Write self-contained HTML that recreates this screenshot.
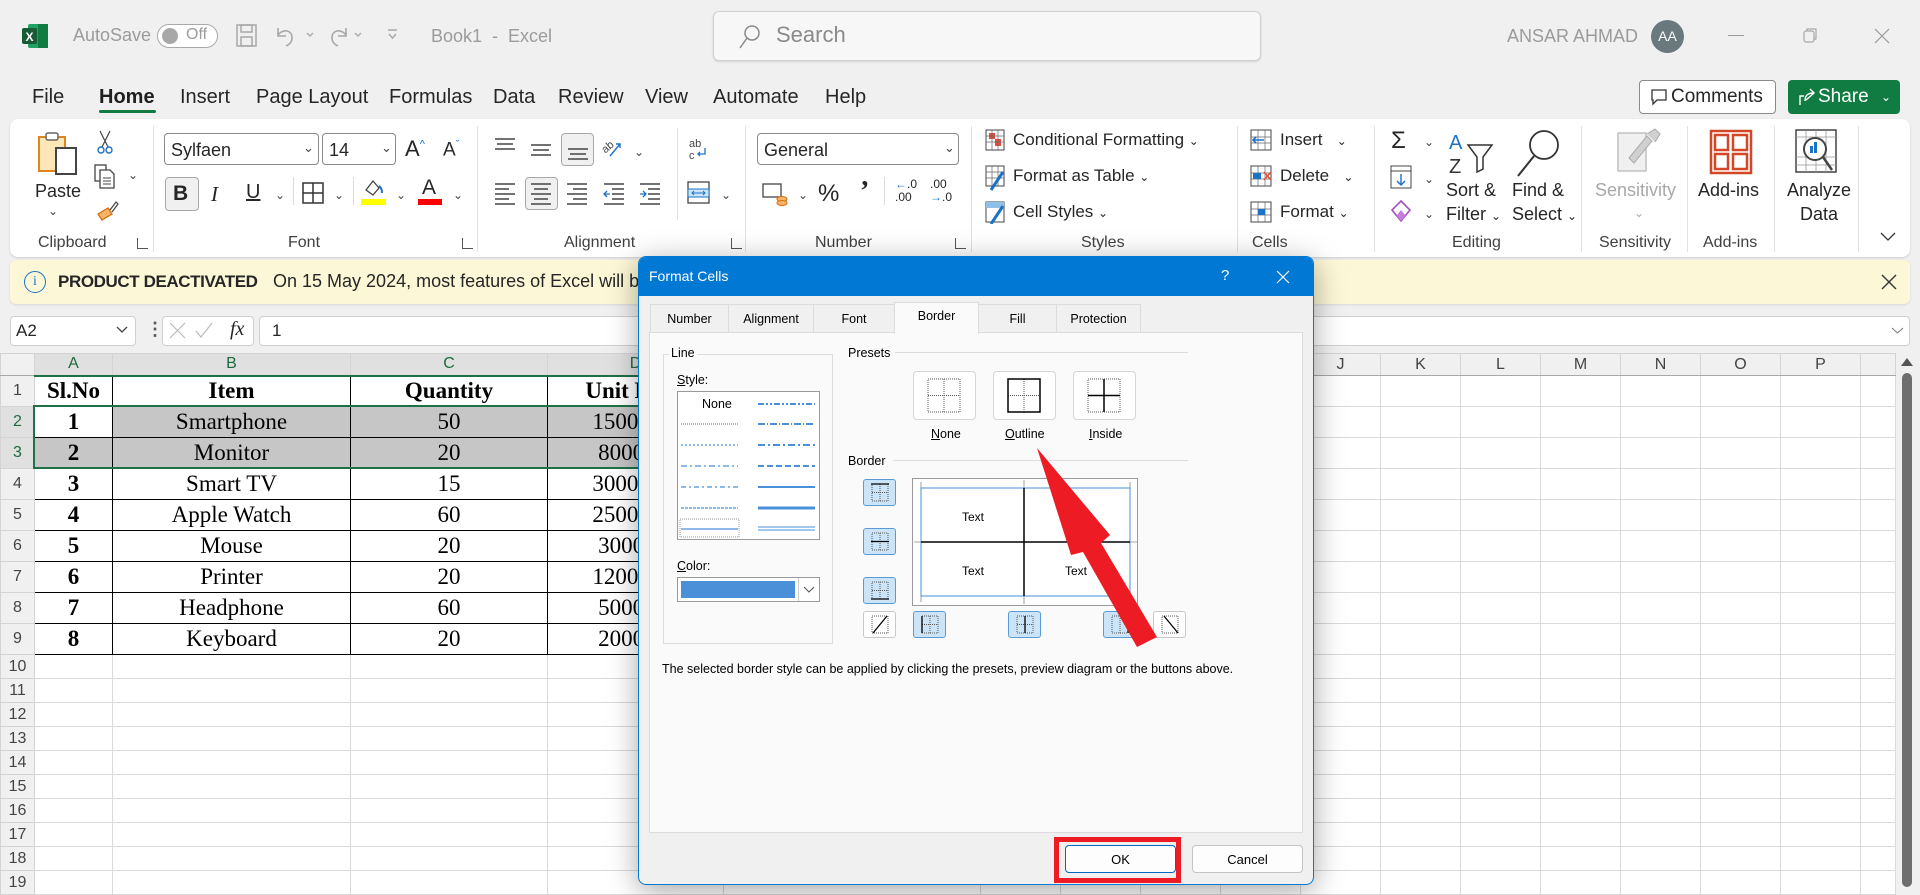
<!DOCTYPE html>
<html><head><meta charset="utf-8">
<style>
*{box-sizing:border-box;margin:0;padding:0}
body{width:1920px;height:887px;overflow:hidden;background:#f0f0f0;font-family:"Liberation Sans",sans-serif;color:#262626;position:relative}
.a{position:absolute}
.t{position:absolute;white-space:nowrap}
.g{color:#9b9b9b}
.menu span{position:absolute;top:86px;font-size:20px;color:#262626}
.rib{left:10px;top:119px;width:1900px;height:138px;background:#fff;border-radius:8px;box-shadow:0 1px 2px rgba(0,0,0,.15)}
.lbl{position:absolute;top:234px;font-size:16px;color:#404040;white-space:nowrap}
.sep{position:absolute;top:126px;width:1px;height:126px;background:#e1e1e1}
.rt{position:absolute;font-size:17px;color:#262626;white-space:nowrap}
.chev{position:absolute;font-size:12px;color:#444}
.combo{position:absolute;border:1px solid #8a8a8a;border-radius:4px;background:#fff;font-size:18px;padding:6px 0 0 6px;height:32px}
.lau{position:absolute;top:238px;width:11px;height:11px;border-left:1px solid #555;border-bottom:1px solid #555}
#sheet{position:absolute;left:0;top:353px;border-collapse:collapse;table-layout:fixed;background:#fff}
#sheet td,#sheet th{border:1px solid #dadada;padding:0;overflow:hidden;white-space:nowrap}
#sheet thead th{height:22px;background:#f0f0f0;font-weight:normal;font-size:16px;color:#444;border-color:#d4d4d4;border-bottom:1px solid #a8a8a8}
#sheet thead th.sc{background:#e0e0e0;color:#1d6b3c;border-bottom:2px solid #1e7145}
#sheet tbody th{background:#f0f0f0;font-weight:normal;font-size:16px;color:#444;text-align:center;border-color:#d4d4d4}
#sheet tbody th.sr{background:#e0e0e0;color:#1d6b3c}
#sheet tr.d td{height:31px;font-family:"Liberation Serif",serif;font-size:23px;color:#000;text-align:center}
#sheet tr.d td.k{border:1px solid #000}
#sheet tr.d td.b{font-weight:bold}
#sheet tr.d td.s{background:#c6c6c6}
#sheet tr.e td,#sheet tr.e th{height:24px}
#dlg{left:638px;top:256px;width:676px;height:629px;background:#f0f0f0;border:1px solid #0078d4;border-radius:8px;box-shadow:0 6px 30px rgba(0,0,0,.35);overflow:hidden;font-size:12.5px;color:#000}
#dlg .t{font-size:12.5px}
.tab{position:absolute;top:47px;height:28px;border:1px solid #dcdcdc;border-bottom:none;background:#f0f0f0;text-align:center;padding-top:7px;font-size:12.5px}
.pb{position:absolute;width:63px;height:49px;background:#fff;border:1px solid #d6d6d6;border-radius:4px}
.bb{position:absolute;width:33px;height:27px;border:1px solid #5b9bd5;border-radius:3px;background:#cce4f7}
.bw{background:#fff;border-color:#c8c8c8}
.btn{position:absolute;top:588px;height:28px;border:1px solid #c4c4c4;border-radius:4px;background:#fdfdfd;text-align:center;padding-top:6px;font-size:13px}
</style></head><body>

<svg class="a" style="left:22px;top:24px" width="26" height="24" viewBox="0 0 26 24"><rect x="6" y="0" width="20" height="24" rx="2" fill="#21a366"/><rect x="16" y="0" width="10" height="24" fill="#107c41"/><rect x="0" y="4" width="15" height="16" rx="2" fill="#185c37"/><text x="3.5" y="17" font-size="12" font-weight="bold" fill="#fff" font-family="Liberation Sans">X</text></svg>
<div class="t g" style="left:73px;top:25px;font-size:18px">AutoSave</div>
<div class="a" style="left:157px;top:24px;width:61px;height:24px;border:1px solid #a8a8a8;border-radius:12px;background:#fff"></div>
<div class="a" style="left:162px;top:28px;width:16px;height:16px;border-radius:50%;background:#a8a8a8"></div>
<div class="t g" style="left:186px;top:26px;font-size:16px">Off</div>
<svg class="a" style="left:236px;top:24px" width="22" height="24"><rect x="1" y="1" width="19" height="21" fill="none" stroke="#a8a8a8" stroke-width="1.5"/><rect x="5" y="1" width="11" height="7" fill="none" stroke="#a8a8a8" stroke-width="1.5"/><rect x="5" y="13" width="11" height="9" fill="none" stroke="#a8a8a8" stroke-width="1.5"/></svg>
<svg class="a" style="left:274px;top:24px" width="50" height="24"><path d="M4 4v8h8M4 11c4-6 14-6 14 3 0 4-3 7-6 8" fill="none" stroke="#a8a8a8" stroke-width="1.6"/><path d="M33 9l3 3 3-3" fill="none" stroke="#a8a8a8" stroke-width="1.3"/></svg>
<svg class="a" style="left:328px;top:24px" width="50" height="24"><path d="M18 4v8h-8M18 11c-4-6-14-6-14 3 0 4 3 7 6 8" fill="none" stroke="#a8a8a8" stroke-width="1.6"/><path d="M27 9l3 3 3-3" fill="none" stroke="#a8a8a8" stroke-width="1.3"/></svg>
<svg class="a" style="left:386px;top:28px" width="14" height="14"><path d="M2 2h9M3 6l3.5 4 3.5-4" fill="none" stroke="#a8a8a8" stroke-width="1.4"/></svg>
<div class="t g" style="left:431px;top:26px;font-size:18px">Book1&nbsp; - &nbsp;Excel</div>
<div class="a" style="left:713px;top:11px;width:548px;height:50px;background:#f7f7f7;border:1px solid #d0d0d0;border-radius:6px;box-shadow:0 1px 2px rgba(0,0,0,.12)"></div>
<svg class="a" style="left:738px;top:24px" width="24" height="26"><circle cx="14" cy="9" r="7" fill="none" stroke="#8a8a8a" stroke-width="1.5"/><path d="M9 14L2 24" stroke="#8a8a8a" stroke-width="1.5"/></svg>
<div class="t" style="left:776px;top:22px;font-size:22px;color:#8a8a8a">Search</div>
<div class="t g" style="left:1507px;top:26px;font-size:18px">ANSAR AHMAD</div>
<div class="a" style="left:1651px;top:20px;width:33px;height:33px;border-radius:50%;background:#69797e;color:#fff;font-size:14px;text-align:center;line-height:33px">AA</div>
<div class="a" style="left:1728px;top:35px;width:16px;height:1px;background:#999"></div>
<svg class="a" style="left:1803px;top:27px" width="16" height="16"><rect x="1" y="4" width="10" height="11" rx="2" fill="none" stroke="#999"/><path d="M4 4V2h9v10h-2" fill="none" stroke="#999"/></svg>
<svg class="a" style="left:1874px;top:28px" width="16" height="16"><path d="M1 1l14 14M15 1L1 15" stroke="#999" stroke-width="1.2"/></svg>

<div class="menu">
<span style="left:32px">File</span><span style="left:99px;font-weight:bold;color:#1f1f1f">Home</span><span style="left:180px">Insert</span><span style="left:256px">Page Layout</span><span style="left:389px">Formulas</span><span style="left:493px">Data</span><span style="left:558px">Review</span><span style="left:645px">View</span><span style="left:713px">Automate</span><span style="left:825px">Help</span>
</div>
<div class="a" style="left:99px;top:110px;width:57px;height:3px;background:#107c41;border-radius:2px"></div>
<div class="a" style="left:1639px;top:80px;width:137px;height:34px;background:#fff;border:1px solid #8a8a8a;border-radius:4px"></div>
<svg class="a" style="left:1650px;top:88px" width="18" height="18"><path d="M2 2h14v10H7l-4 4v-4H2z" fill="none" stroke="#333" stroke-width="1.3"/></svg>
<div class="t" style="left:1671px;top:86px;font-size:19px">Comments</div>
<div class="a" style="left:1788px;top:80px;width:112px;height:34px;background:#107c41;border-radius:4px"></div>
<svg class="a" style="left:1797px;top:87px" width="20" height="20"><path d="M3 18V9h4M9 13l8-7-4-4M17 6c-6 0-9 2-9 8" fill="none" stroke="#fff" stroke-width="1.4"/></svg>
<div class="t" style="left:1818px;top:86px;font-size:19px;color:#fff">Share</div>
<div class="t" style="left:1881px;top:90px;font-size:12px;color:#fff">&#8964;</div>

<div class="a rib"></div>
<svg class="a" style="left:37px;top:130px" width="44" height="50"><rect x="2" y="7" width="26" height="34" fill="#fde7b8" stroke="#e0861c" stroke-width="2"/><rect x="9" y="3" width="12" height="7" rx="2" fill="#fff" stroke="#666" stroke-width="1.5"/><rect x="19" y="18" width="20" height="26" fill="#fff" stroke="#444" stroke-width="2"/></svg>
<div class="rt" style="left:35px;top:181px;font-size:18px">Paste</div>
<div class="chev" style="left:48px;top:204px">&#8964;</div>
<svg class="a" style="left:96px;top:130px" width="18" height="24"><path d="M4 1l8 16M14 1L6 17" stroke="#444" stroke-width="1.2"/><circle cx="5" cy="20" r="3" fill="none" stroke="#1a73c8" stroke-width="1.4"/><circle cx="13" cy="20" r="3" fill="none" stroke="#1a73c8" stroke-width="1.4"/></svg>
<svg class="a" style="left:94px;top:164px" width="24" height="26"><rect x="1" y="1" width="11" height="16" fill="#fff" stroke="#444" stroke-width="1.3"/><path d="M6 6h10l4 4v14H6z" fill="#fff" stroke="#444" stroke-width="1.3"/><path d="M9 14h8M9 17h8M9 20h8" stroke="#444"/></svg>
<div class="chev" style="left:128px;top:168px">&#8964;</div>
<svg class="a" style="left:96px;top:200px" width="24" height="22"><path d="M2 14l10-6 4 6-10 6z" fill="#f8b26a" stroke="#d4700b" stroke-width="1.3"/><path d="M14 10l6-8 2 2-6 8" fill="#fff" stroke="#444" stroke-width="1.2"/></svg>
<div class="lbl" style="left:38px">Clipboard</div>
<div class="lau" style="left:137px"></div>
<div class="sep" style="left:153px"></div>
<div class="combo" style="left:164px;top:133px;width:155px">Sylfaen</div>
<div class="chev" style="left:303px;top:140px;font-size:13px">&#8964;</div>
<div class="combo" style="left:322px;top:133px;width:74px">14</div>
<div class="chev" style="left:381px;top:140px;font-size:13px">&#8964;</div>
<div class="rt" style="left:405px;top:136px;font-size:22px">A<sup style="font-size:11px;color:#1a73c8">^</sup></div>
<div class="rt" style="left:443px;top:139px;font-size:19px">A<sup style="font-size:11px;color:#1a73c8">&#711;</sup></div>
<div class="a" style="left:165px;top:177px;width:34px;height:34px;background:#f0f0f0;border:1px solid #a8a8a8;border-radius:4px"></div>
<div class="rt" style="left:173px;top:182px;font-size:21px;font-weight:bold">B</div>
<div class="rt" style="left:211px;top:182px;font-size:21px;font-style:italic;font-family:'Liberation Serif',serif">I</div>
<div class="rt" style="left:246px;top:181px;font-size:20px;text-decoration:underline">U</div>
<div class="chev" style="left:275px;top:188px">&#8964;</div>
<div class="a" style="left:293px;top:177px;width:1px;height:28px;background:#ddd"></div>
<svg class="a" style="left:302px;top:182px" width="22" height="22"><rect x="1" y="1" width="20" height="20" fill="none" stroke="#333" stroke-width="1.5"/><path d="M11 1v20M1 11h20" stroke="#333" stroke-width="1.5"/></svg>
<div class="chev" style="left:334px;top:188px">&#8964;</div>
<div class="a" style="left:353px;top:177px;width:1px;height:28px;background:#ddd"></div>
<svg class="a" style="left:361px;top:178px" width="26" height="20"><path d="M5 12l7-9 6 7-6 7z" fill="none" stroke="#444" stroke-width="1.3"/><path d="M18 8c3 2 3 5 3 7" stroke="#1a73c8" stroke-width="2" fill="none"/></svg>
<div class="a" style="left:361px;top:199px;width:25px;height:6px;background:#ffff00"></div>
<div class="chev" style="left:396px;top:188px">&#8964;</div>
<div class="rt" style="left:422px;top:176px;font-size:21px">A</div>
<div class="a" style="left:418px;top:199px;width:24px;height:6px;background:#ff0000"></div>
<div class="chev" style="left:453px;top:188px">&#8964;</div>
<div class="lbl" style="left:288px">Font</div>
<div class="lau" style="left:462px"></div>
<div class="sep" style="left:477px"></div>
<svg class="a" style="left:494px;top:136px" width="110" height="26"><g stroke="#444" stroke-width="1.5"><path d="M1 3h20M3 8h16M1 13h20"/><path d="M37 9h20M39 14h16M37 19h20"/></g></svg>
<div class="a" style="left:561px;top:133px;width:33px;height:33px;background:#f0f0f0;border:1px solid #a8a8a8;border-radius:4px"></div>
<svg class="a" style="left:567px;top:140px" width="22" height="22"><g stroke="#444" stroke-width="1.5"><path d="M1 9h20M3 14h16M1 19h20"/></g></svg>
<svg class="a" style="left:600px;top:136px" width="24" height="24"><text x="1" y="14" font-size="11" font-family="Liberation Sans" fill="#444" transform="rotate(-40 8 10)">ab</text><path d="M10 20l10-12M16 8h4v4" stroke="#1a73c8" stroke-width="1.4" fill="none"/></svg>
<div class="chev" style="left:634px;top:145px">&#8964;</div>
<div class="a" style="left:525px;top:177px;width:33px;height:33px;background:#f0f0f0;border:1px solid #a8a8a8;border-radius:4px"></div>
<svg class="a" style="left:494px;top:182px" width="175" height="24"><g stroke="#444" stroke-width="1.5"><path d="M1 2h20M1 7h14M1 12h20M1 17h14M1 22h20"/><path d="M37 2h20M40 7h14M37 12h20M40 17h14M37 22h20"/><path d="M73 2h20M79 7h14M73 12h20M79 17h14M73 22h20"/><path d="M110 2h20M118 7h12M118 12h12M118 17h12M110 22h20"/><path d="M146 2h20M154 7h12M154 12h12M154 17h12M146 22h20"/></g><path d="M116 12h-6M113 9l-3 3 3 3" stroke="#1a73c8" stroke-width="1.3" fill="none"/><path d="M146 12h6M149 9l3 3-3 3" stroke="#1a73c8" stroke-width="1.3" fill="none"/></svg>
<div class="a" style="left:677px;top:128px;width:1px;height:92px;background:#e1e1e1"></div>
<svg class="a" style="left:688px;top:136px" width="22" height="26"><text x="1" y="11" font-size="11" font-family="Liberation Sans" fill="#444">ab</text><text x="1" y="23" font-size="11" font-family="Liberation Sans" fill="#444">c</text><path d="M17 12v6h-7M12 16l-2 2 2 2" stroke="#1a73c8" stroke-width="1.3" fill="none"/></svg>
<svg class="a" style="left:687px;top:181px" width="24" height="24"><rect x="1" y="1" width="21" height="21" fill="#fff" stroke="#444" stroke-width="1.3"/><rect x="1" y="8" width="21" height="8" fill="#cde4f7" stroke="#1a73c8"/><path d="M5 12h13M7 10l-2 2 2 2M16 10l2 2-2 2" stroke="#1a73c8" fill="none"/></svg>
<div class="chev" style="left:721px;top:188px">&#8964;</div>
<div class="lbl" style="left:564px">Alignment</div>
<div class="lau" style="left:731px"></div>
<div class="sep" style="left:745px"></div>
<div class="combo" style="left:757px;top:133px;width:202px">General</div>
<div class="chev" style="left:944px;top:140px;font-size:13px">&#8964;</div>
<svg class="a" style="left:762px;top:182px" width="26" height="26"><rect x="1" y="2" width="18" height="13" fill="#fff" stroke="#444" stroke-width="1.3"/><ellipse cx="20" cy="17" rx="5" ry="2.5" fill="#f8b26a" stroke="#d4700b"/><ellipse cx="20" cy="21" rx="5" ry="2.5" fill="#f8b26a" stroke="#d4700b"/></svg>
<div class="chev" style="left:798px;top:188px">&#8964;</div>
<div class="rt" style="left:818px;top:180px;font-size:24px">%</div>
<div class="rt" style="left:860px;top:176px;font-size:28px;font-weight:bold;font-family:'Liberation Serif',serif">&#8217;</div>
<div class="a" style="left:884px;top:177px;width:1px;height:28px;background:#ddd"></div>
<div class="rt" style="left:895px;top:178px;font-size:12px;line-height:13px"><span style="color:#1a73c8">&#8592;</span>.0<br>.00</div>
<div class="rt" style="left:930px;top:178px;font-size:12px;line-height:13px">.00<br><span style="color:#1a73c8">&#8594;</span>.0</div>
<div class="lbl" style="left:815px">Number</div>
<div class="lau" style="left:955px"></div>
<div class="sep" style="left:971px"></div>
<svg class="a" style="left:985px;top:128px" width="22" height="96"><rect x="1" y="2" width="18" height="20" fill="#fff" stroke="#444"/><rect x="4" y="5" width="6" height="6" fill="#e74c3c"/><rect x="10" y="11" width="6" height="7" fill="#e74c3c"/><path d="M1 8h18M1 14h18M7 2v20M13 2v20" stroke="#666" stroke-width=".7"/><rect x="1" y="38" width="18" height="20" fill="#fff" stroke="#444"/><path d="M1 44h18M1 50h18M7 38v20M13 38v20" stroke="#666" stroke-width=".7"/><path d="M6 62l12-18" stroke="#1a73c8" stroke-width="3"/><rect x="1" y="74" width="18" height="20" fill="#fff" stroke="#444"/><rect x="1" y="74" width="18" height="6" fill="#8fc0ea"/><path d="M6 96l12-18" stroke="#1a73c8" stroke-width="3"/></svg>
<div class="rt" style="left:1013px;top:130px">Conditional Formatting <span style="font-size:12px">&#8964;</span></div>
<div class="rt" style="left:1013px;top:166px">Format as Table <span style="font-size:12px">&#8964;</span></div>
<div class="rt" style="left:1013px;top:202px">Cell Styles <span style="font-size:12px">&#8964;</span></div>
<div class="lbl" style="left:1081px">Styles</div>
<div class="sep" style="left:1237px"></div>
<svg class="a" style="left:1250px;top:128px" width="24" height="96"><rect x="1" y="2" width="20" height="20" fill="#fff" stroke="#444"/><path d="M1 9h20M1 15h20M8 2v20M15 2v20" stroke="#666" stroke-width=".7"/><path d="M14 12H3M6 9l-3 3 3 3" stroke="#1a73c8" stroke-width="1.6" fill="none"/><rect x="1" y="38" width="20" height="20" fill="#fff" stroke="#444"/><path d="M1 45h20M1 51h20M8 38v20M15 38v20" stroke="#666" stroke-width=".7"/><rect x="3" y="45" width="8" height="6" fill="#1a73c8"/><path d="M14 44l7 8M21 44l-7 8" stroke="#e74c3c" stroke-width="1.5"/><rect x="1" y="74" width="20" height="20" fill="#fff" stroke="#444"/><path d="M1 81h20M1 87h20M8 74v20M15 74v20" stroke="#666" stroke-width=".7"/><rect x="8" y="81" width="7" height="6" fill="#1a73c8"/></svg>
<div class="rt" style="left:1280px;top:130px">Insert &nbsp;&nbsp;<span style="font-size:12px">&#8964;</span></div>
<div class="rt" style="left:1280px;top:166px">Delete &nbsp;&nbsp;<span style="font-size:12px">&#8964;</span></div>
<div class="rt" style="left:1280px;top:202px">Format <span style="font-size:12px">&#8964;</span></div>
<div class="lbl" style="left:1252px">Cells</div>
<div class="sep" style="left:1374px"></div>
<div class="rt" style="left:1391px;top:127px;font-size:24px">&#931;</div>
<div class="chev" style="left:1424px;top:135px">&#8964;</div>
<svg class="a" style="left:1390px;top:165px" width="22" height="24"><rect x="1" y="1" width="20" height="22" fill="#fff" stroke="#444"/><path d="M1 6h20" stroke="#444"/><path d="M11 9v11M7 16l4 4 4-4" stroke="#1a73c8" stroke-width="1.4" fill="none"/></svg>
<div class="chev" style="left:1424px;top:172px">&#8964;</div>
<svg class="a" style="left:1390px;top:199px" width="22" height="24"><path d="M11 2l9 9-9 11-9-11z" fill="#fff" stroke="#a64dbf" stroke-width="1.6"/><path d="M6.5 16.5l4.5-5.5 4.5 5.5-4.5 5.5z" fill="#c77dde"/></svg>
<div class="chev" style="left:1424px;top:207px">&#8964;</div>
<svg class="a" style="left:1448px;top:129px" width="50" height="48"><text x="1" y="20" font-size="20" fill="#1a73c8" font-family="Liberation Sans">A</text><text x="1" y="44" font-size="20" fill="#333" font-family="Liberation Sans">Z</text><path d="M20 16h24l-9 12v12l-6 3V28z" fill="none" stroke="#333" stroke-width="1.5"/></svg>
<div class="rt" style="left:1446px;top:180px;font-size:18px">Sort &amp;</div>
<div class="rt" style="left:1446px;top:204px;font-size:18px">Filter <span style="font-size:12px">&#8964;</span></div>
<svg class="a" style="left:1514px;top:128px" width="48" height="50"><circle cx="30" cy="17" r="14" fill="none" stroke="#333" stroke-width="1.8"/><path d="M20 28L4 48" stroke="#333" stroke-width="2"/></svg>
<div class="rt" style="left:1512px;top:180px;font-size:18px">Find &amp;</div>
<div class="rt" style="left:1512px;top:204px;font-size:18px">Select <span style="font-size:12px">&#8964;</span></div>
<div class="lbl" style="left:1452px">Editing</div>
<div class="sep" style="left:1581px"></div>
<svg class="a" style="left:1617px;top:128px" width="46" height="50"><rect x="1" y="5" width="28" height="38" fill="#f0f0f0" stroke="#c0c0c0" stroke-width="1.5"/><path d="M12 30l18-22 5 5-18 22z" fill="#d0d0d0" stroke="#aaa"/><path d="M30 6l8-5 5 5-5 8" fill="#d0d0d0" stroke="#aaa"/></svg>
<div class="rt" style="left:1595px;top:180px;font-size:18px;color:#a8a8a8">Sensitivity</div>
<div class="chev" style="left:1634px;top:206px;color:#aaa">&#8964;</div>
<div class="lbl" style="left:1599px">Sensitivity</div>
<div class="sep" style="left:1687px"></div>
<svg class="a" style="left:1709px;top:129px" width="44" height="46"><g fill="none" stroke="#d24726" stroke-width="2.5"><rect x="2" y="2" width="40" height="42"/><rect x="6" y="6" width="13" height="15"/><rect x="24" y="6" width="14" height="15"/><rect x="6" y="25" width="13" height="15"/><rect x="24" y="25" width="14" height="15"/></g></svg>
<div class="rt" style="left:1698px;top:180px;font-size:18px">Add-ins</div>
<div class="lbl" style="left:1703px">Add-ins</div>
<div class="sep" style="left:1774px"></div>
<svg class="a" style="left:1795px;top:129px" width="46" height="46"><rect x="1" y="1" width="40" height="42" fill="#fff" stroke="#444" stroke-width="1.5"/><path d="M1 8h40M1 28h40M1 36h40M11 1v42M21 1v42M31 1v42" stroke="#999" stroke-width=".8"/><circle cx="20" cy="20" r="11" fill="#fff" stroke="#444" stroke-width="2"/><rect x="15" y="17" width="3" height="7" fill="#1a73c8"/><rect x="19" y="13" width="3" height="11" fill="#1a73c8"/><path d="M28 28l9 13" stroke="#444" stroke-width="2.5"/></svg>
<div class="rt" style="left:1787px;top:180px;font-size:18px">Analyze</div>
<div class="rt" style="left:1800px;top:204px;font-size:18px">Data</div>
<div class="sep" style="left:1858px"></div>
<svg class="a" style="left:1880px;top:232px" width="16" height="10"><path d="M1 1l7 7 7-7" fill="none" stroke="#333" stroke-width="1.3"/></svg>

<div class="a" style="left:10px;top:260px;width:1900px;height:44px;background:#fcf7d6;border-radius:6px;box-shadow:0 1px 2px rgba(0,0,0,.1)"></div>
<div class="a" style="left:24px;top:271px;width:22px;height:22px;border:1.5px solid #1a73c8;border-radius:50%;color:#1a73c8;font-size:14px;text-align:center;line-height:19px;font-family:'Liberation Serif',serif">i</div>
<div class="t" style="left:58px;top:272px;font-size:17px;font-weight:bold;color:#262626;letter-spacing:-0.4px">PRODUCT DEACTIVATED</div>
<div class="t" style="left:273px;top:271px;font-size:18px;color:#262626">On 15 May 2024, most features of Excel will be disabled.</div>
<svg class="a" style="left:1881px;top:274px" width="16" height="16"><path d="M1 1l14 14M15 1L1 15" stroke="#333" stroke-width="1.4"/></svg>

<div class="a" style="left:10px;top:316px;width:126px;height:30px;background:#fff;border:1px solid #d0d0d0;border-radius:4px"></div>
<div class="t" style="left:16px;top:321px;font-size:17px">A2</div>
<svg class="a" style="left:116px;top:326px" width="12" height="8"><path d="M1 1l5 5 5-5" fill="none" stroke="#444" stroke-width="1.3"/></svg>
<div class="t" style="left:146px;top:319px;font-size:18px;font-weight:bold;color:#555">&#8942;</div>
<div class="a" style="left:162px;top:316px;width:92px;height:30px;background:#fff;border:1px solid #d0d0d0;border-radius:4px"></div>
<svg class="a" style="left:169px;top:322px" width="50" height="18"><path d="M1 1l15 15M16 1L1 16" stroke="#bbb" stroke-width="1.2"/><path d="M27 9l5 6 11-14" fill="none" stroke="#bbb" stroke-width="1.2"/></svg>
<div class="t" style="left:230px;top:318px;font-size:20px;font-style:italic;font-family:'Liberation Serif',serif">fx</div>
<div class="a" style="left:259px;top:316px;width:1651px;height:30px;background:#fff;border:1px solid #d0d0d0;border-radius:4px"></div>
<div class="t" style="left:272px;top:321px;font-size:17px">1</div>
<svg class="a" style="left:1891px;top:327px" width="13" height="8"><path d="M1 1l5.5 5 5.5-5" fill="none" stroke="#777"/></svg>

<table id="sheet" style="width:1895px">
<colgroup><col style="width:34px"><col style="width:78px"><col style="width:238px"><col style="width:197px"><col style="width:176px"><col style="width:257px"><col style="width:80px"><col style="width:80px"><col style="width:80px"><col style="width:80px"><col style="width:80px"><col style="width:80px"><col style="width:80px"><col style="width:80px"><col style="width:80px"><col style="width:80px"><col style="width:80px"><col style="width:35px"></colgroup>
<thead><tr><th style="background:#f0f0f0"></th><th class="sc">A</th><th class="sc">B</th><th class="sc">C</th><th class="sc">D</th><th>E</th><th>F</th><th>G</th><th>H</th><th>I</th><th>J</th><th>K</th><th>L</th><th>M</th><th>N</th><th>O</th><th>P</th><th></th></tr></thead>
<tbody>
<tr class="d"><th>1</th><td class="k b">Sl.No</td><td class="k b">Item</td><td class="k b">Quantity</td><td class="k b">Unit Price</td><td></td><td></td><td></td><td></td><td></td><td></td><td></td><td></td><td></td><td></td><td></td><td></td><td></td></tr>
<tr class="d"><th class="sr">2</th><td class="k b">1</td><td class="k s">Smartphone</td><td class="k s">50</td><td class="k s">15000.00</td><td></td><td></td><td></td><td></td><td></td><td></td><td></td><td></td><td></td><td></td><td></td><td></td><td></td></tr>
<tr class="d"><th class="sr">3</th><td class="k b s">2</td><td class="k s">Monitor</td><td class="k s">20</td><td class="k s">8000.00</td><td></td><td></td><td></td><td></td><td></td><td></td><td></td><td></td><td></td><td></td><td></td><td></td><td></td></tr>
<tr class="d"><th>4</th><td class="k b">3</td><td class="k">Smart TV</td><td class="k">15</td><td class="k">30000.00</td><td></td><td></td><td></td><td></td><td></td><td></td><td></td><td></td><td></td><td></td><td></td><td></td><td></td></tr>
<tr class="d"><th>5</th><td class="k b">4</td><td class="k">Apple Watch</td><td class="k">60</td><td class="k">25000.00</td><td></td><td></td><td></td><td></td><td></td><td></td><td></td><td></td><td></td><td></td><td></td><td></td><td></td></tr>
<tr class="d"><th>6</th><td class="k b">5</td><td class="k">Mouse</td><td class="k">20</td><td class="k">3000.00</td><td></td><td></td><td></td><td></td><td></td><td></td><td></td><td></td><td></td><td></td><td></td><td></td><td></td></tr>
<tr class="d"><th>7</th><td class="k b">6</td><td class="k">Printer</td><td class="k">20</td><td class="k">12000.00</td><td></td><td></td><td></td><td></td><td></td><td></td><td></td><td></td><td></td><td></td><td></td><td></td><td></td></tr>
<tr class="d"><th>8</th><td class="k b">7</td><td class="k">Headphone</td><td class="k">60</td><td class="k">5000.00</td><td></td><td></td><td></td><td></td><td></td><td></td><td></td><td></td><td></td><td></td><td></td><td></td><td></td></tr>
<tr class="d"><th>9</th><td class="k b">8</td><td class="k">Keyboard</td><td class="k">20</td><td class="k">2000.00</td><td></td><td></td><td></td><td></td><td></td><td></td><td></td><td></td><td></td><td></td><td></td><td></td><td></td></tr>
<tr class="e"><th>10</th><td></td><td></td><td></td><td></td><td></td><td></td><td></td><td></td><td></td><td></td><td></td><td></td><td></td><td></td><td></td><td></td><td></td></tr>
<tr class="e"><th>11</th><td></td><td></td><td></td><td></td><td></td><td></td><td></td><td></td><td></td><td></td><td></td><td></td><td></td><td></td><td></td><td></td><td></td></tr>
<tr class="e"><th>12</th><td></td><td></td><td></td><td></td><td></td><td></td><td></td><td></td><td></td><td></td><td></td><td></td><td></td><td></td><td></td><td></td><td></td></tr>
<tr class="e"><th>13</th><td></td><td></td><td></td><td></td><td></td><td></td><td></td><td></td><td></td><td></td><td></td><td></td><td></td><td></td><td></td><td></td><td></td></tr>
<tr class="e"><th>14</th><td></td><td></td><td></td><td></td><td></td><td></td><td></td><td></td><td></td><td></td><td></td><td></td><td></td><td></td><td></td><td></td><td></td></tr>
<tr class="e"><th>15</th><td></td><td></td><td></td><td></td><td></td><td></td><td></td><td></td><td></td><td></td><td></td><td></td><td></td><td></td><td></td><td></td><td></td></tr>
<tr class="e"><th>16</th><td></td><td></td><td></td><td></td><td></td><td></td><td></td><td></td><td></td><td></td><td></td><td></td><td></td><td></td><td></td><td></td><td></td></tr>
<tr class="e"><th>17</th><td></td><td></td><td></td><td></td><td></td><td></td><td></td><td></td><td></td><td></td><td></td><td></td><td></td><td></td><td></td><td></td><td></td></tr>
<tr class="e"><th>18</th><td></td><td></td><td></td><td></td><td></td><td></td><td></td><td></td><td></td><td></td><td></td><td></td><td></td><td></td><td></td><td></td><td></td></tr>
<tr class="e"><th>19</th><td></td><td></td><td></td><td></td><td></td><td></td><td></td><td></td><td></td><td></td><td></td><td></td><td></td><td></td><td></td><td></td><td></td></tr>
</tbody></table>
<div class="a" style="left:33px;top:405px;width:690px;height:64px;border:2px solid #1e7145"></div>
<div class="a" style="left:1896px;top:353px;width:24px;height:534px;background:#f0f0f0"></div>
<svg class="a" style="left:1900px;top:357px" width="14" height="10"><path d="M7 1l6 8H1z" fill="#555"/></svg>
<div class="a" style="left:1902px;top:373px;width:10px;height:514px;background:#6e6e6e;border-radius:5px"></div>

<div class="a" id="dlg">
<div class="a" style="left:0;top:0;width:676px;height:39px;background:#0078d4"></div>
<div class="t" style="left:10px;top:11px;font-size:14px;color:#fff">Format Cells</div>
<div class="t" style="left:582px;top:10px;font-size:15px;color:#fff">?</div>
<svg class="a" style="left:637px;top:13px" width="14" height="14"><path d="M1 1l12 12M13 1L1 13" stroke="#fff" stroke-width="1.2"/></svg>
<div class="tab" style="left:11px;width:79px">Number</div>
<div class="tab" style="left:89px;width:86px">Alignment</div>
<div class="tab" style="left:174px;width:82px">Font</div>
<div class="tab" style="left:255px;top:45px;width:85px;height:32px;background:#fafafa;z-index:2;padding-top:6px">Border</div>
<div class="tab" style="left:339px;width:79px">Fill</div>
<div class="tab" style="left:417px;width:85px">Protection</div>
<div class="a" style="left:10px;top:75px;width:654px;height:501px;background:#fafafa;border:1px solid #dcdcdc"></div>
<div class="a" style="left:24px;top:97px;width:170px;height:290px;border:1px solid #dcdcdc"></div>
<div class="t" style="left:30px;top:89px;background:#fafafa;padding:0 2px">Line</div>
<div class="t" style="left:38px;top:116px"><u>S</u>tyle:</div>
<div class="a" style="left:38px;top:134px;width:143px;height:149px;background:#fff;border:1px solid #9a9a9a"></div>
<div class="t" style="left:63px;top:140px">None</div>
<svg class="a" style="left:40px;top:136px" width="140" height="146"><g stroke="#4a90d9" stroke-width="1.3" fill="none">
<path d="M2 31h57" stroke-dasharray="1 1"/><path d="M2 52h57" stroke-dasharray="2 2"/><path d="M2 73h57" stroke-dasharray="6 3 2 3"/><path d="M2 94h57" stroke-dasharray="5 3 2 3"/><path d="M2 115h57" stroke-dasharray="3 1"/>
<path d="M79 11h57" stroke-dasharray="6 2 2 2 2 2" stroke-width="2"/><path d="M79 31h57" stroke-dasharray="7 2 1 2" stroke-width="2"/><path d="M79 52h57" stroke-dasharray="7 3 2 3" stroke-width="2"/><path d="M79 73h57" stroke-dasharray="6 3" stroke-width="2"/><path d="M79 94h57" stroke-width="2"/><path d="M79 115h57" stroke-width="3"/><path d="M79 134h57M79 137h57" stroke-width="1"/>
<path d="M2 136h57"/></g><rect x="1" y="126" width="59" height="18" fill="none" stroke="#999" stroke-dasharray="1 1"/></svg>
<div class="t" style="left:38px;top:302px"><u>C</u>olor:</div>
<div class="a" style="left:38px;top:320px;width:143px;height:25px;background:#fff;border:1px solid #9a9a9a"></div>
<div class="a" style="left:42px;top:324px;width:114px;height:17px;background:#4a90d9"></div>
<div class="a" style="left:159px;top:321px;width:1px;height:23px;background:#ccc"></div>
<svg class="a" style="left:164px;top:329px" width="12" height="8"><path d="M1 1l5 5 5-5" fill="none" stroke="#555"/></svg>
<div class="t" style="left:209px;top:89px">Presets</div>
<div class="a" style="left:256px;top:95px;width:293px;height:1px;background:#dcdcdc"></div>
<div class="pb" style="left:274px;top:114px"></div>
<div class="pb" style="left:354px;top:114px"></div>
<div class="pb" style="left:434px;top:114px"></div>
<svg class="a" style="left:274px;top:114px" width="224" height="50"><g fill="none" stroke="#555" stroke-dasharray="1 1"><rect x="15" y="8" width="32" height="33"/><path d="M31 8v33M15 24.5h32"/><path d="M111 8v33M95 24.5h32"/><rect x="175" y="8" width="32" height="33"/></g><rect x="95" y="8" width="32" height="33" fill="none" stroke="#000" stroke-width="1.5"/><path d="M191 8v33M175 24.5h32" stroke="#000" stroke-width="1.5"/></svg>
<div class="t" style="left:292px;top:170px"><u>N</u>one</div>
<div class="t" style="left:366px;top:170px"><u>O</u>utline</div>
<div class="t" style="left:450px;top:170px"><u>I</u>nside</div>
<div class="t" style="left:209px;top:197px">Border</div>
<div class="a" style="left:254px;top:203px;width:295px;height:1px;background:#dcdcdc"></div>
<div class="bb" style="left:224px;top:222px"></div>
<div class="bb" style="left:224px;top:271px"></div>
<div class="bb" style="left:224px;top:320px"></div>
<div class="bb bw" style="left:224px;top:354px"></div>
<div class="bb" style="left:274px;top:354px"></div>
<div class="bb" style="left:369px;top:354px"></div>
<div class="bb" style="left:464px;top:354px"></div>
<div class="bb bw" style="left:514px;top:354px"></div>
<svg class="a" style="left:224px;top:222px" width="330" height="162"><g fill="none" stroke="#555" stroke-dasharray="1 1">
<rect x="9" y="5" width="16" height="17"/><rect x="9" y="54" width="16" height="17"/><rect x="9" y="103" width="16" height="17"/><rect x="9" y="137" width="16" height="17"/>
<rect x="59" y="137" width="16" height="17"/><rect x="154" y="137" width="16" height="17"/><rect x="249" y="137" width="16" height="17"/><rect x="299" y="137" width="16" height="17"/>
<path d="M17 5v17M9 13.5h16M17 54v17M17 103v17M9 111.5h16M67 137v17M59 145.5h16M154 145.5h16M257 137v17"/></g>
<g stroke="#000" stroke-width="1.3"><path d="M8 5h18M8 62.5h18M8 120h18M10 154l14-17M59 137v17M162 137v17M265 137v17M301 137l14 17"/></g></svg>
<div class="a" style="left:273px;top:221px;width:226px;height:128px;background:#fff;border:1px solid #9a9a9a"></div>
<svg class="a" style="left:273px;top:221px" width="226" height="128"><g stroke="#888" stroke-width=".8"><path d="M9 4v6M218 4v6M9 118v6M218 118v6M112 2v8M112 118v8M2 64h7M218 64h7"/></g><rect x="9" y="10" width="209" height="108" fill="none" stroke="#4a90d9" stroke-width="1"/><path d="M112 10v108M9 64h209" stroke="#000" stroke-width="1.5"/></svg>
<div class="t" style="left:323px;top:253px;font-size:12px">Text</div>
<div class="t" style="left:323px;top:307px;font-size:12px">Text</div>
<div class="t" style="left:426px;top:307px;font-size:12px">Text</div>
<div class="t" style="left:23px;top:405px;font-size:12.5px">The selected border style can be applied by clicking the presets, preview diagram or the buttons above.</div>
<div class="btn" style="left:426px;width:111px;border:1px solid #0067c0">OK</div>
<div class="btn" style="left:553px;width:111px">Cancel</div>
<div class="a" style="left:415px;top:580px;width:127px;height:46px;border:5px solid #ed1c24"></div>
</div>

<svg class="a" style="left:0;top:0" width="1920" height="887"><polygon points="1037,448 1110,535 1101,543 1157,637 1137,647 1083,552 1071,555" fill="#ed1c24"/></svg>
</body></html>
